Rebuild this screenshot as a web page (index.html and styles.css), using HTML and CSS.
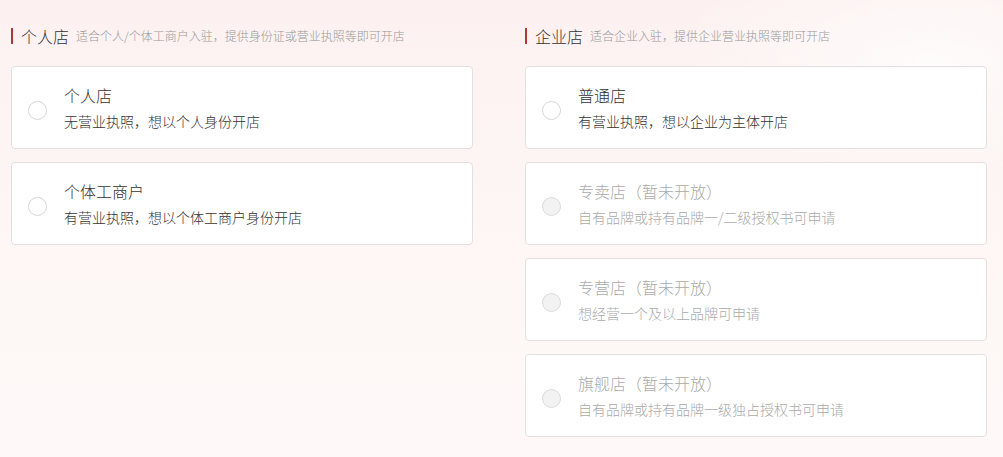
FILE: index.html
```html
<!DOCTYPE html>
<html lang="zh-CN">
<head>
    <meta charset="UTF-8">
    <meta name="viewport" content="width=device-width, initial-scale=1.0">
    <title>选择店铺类型</title>
    <link rel="stylesheet" href="styles.css">
</head>
<body>
    <div class="wrap">
        <div class="col">
            <div class="head">
                <span class="head-title">个人店</span>
                <span class="head-desc">适合个人/个体工商户入驻，提供身份证或营业执照等即可开店</span>
            </div>
            <ul class="list">
                <li class="item">
                    <i class="radio"></i>
                    <div class="text">
                        <p class="name">个人店</p>
                        <p class="desc">无营业执照，想以个人身份开店</p>
                    </div>
                </li>
                <li class="item">
                    <i class="radio"></i>
                    <div class="text">
                        <p class="name">个体工商户</p>
                        <p class="desc">有营业执照，想以个体工商户身份开店</p>
                    </div>
                </li>
            </ul>
        </div>
        <div class="col">
            <div class="head">
                <span class="head-title">企业店</span>
                <span class="head-desc">适合企业入驻，提供企业营业执照等即可开店</span>
            </div>
            <ul class="list">
                <li class="item">
                    <i class="radio"></i>
                    <div class="text">
                        <p class="name">普通店</p>
                        <p class="desc">有营业执照，想以企业为主体开店</p>
                    </div>
                </li>
                <li class="item disabled">
                    <i class="radio"></i>
                    <div class="text">
                        <p class="name">专卖店（暂未开放）</p>
                        <p class="desc">自有品牌或持有品牌一/二级授权书可申请</p>
                    </div>
                </li>
                <li class="item disabled">
                    <i class="radio"></i>
                    <div class="text">
                        <p class="name">专营店（暂未开放）</p>
                        <p class="desc">想经营一个及以上品牌可申请</p>
                    </div>
                </li>
                <li class="item disabled">
                    <i class="radio"></i>
                    <div class="text">
                        <p class="name">旗舰店（暂未开放）</p>
                        <p class="desc">自有品牌或持有品牌一级独占授权书可申请</p>
                    </div>
                </li>
            </ul>
        </div>
    </div>
</body>
</html>
```

FILE: styles.css
```css
* {
    margin: 0;
    padding: 0;
}
ul,li {
    list-style: none;
}
html,body {
    height: 100%;
}
body {
    font-family: "Noto Sans CJK SC", "Liberation Sans", sans-serif;
    color: #333;
    background: radial-gradient(ellipse 260px 120px at 930px 60px, rgba(255,255,255,0.7), rgba(255,255,255,0)),
                linear-gradient(180deg, #fcf1f0 0%, #fdf6f5 45%, #fef9f8 100%);
}
.wrap {
    display: flex;
    gap: 52px;
    padding: 28px 16px 0 11px;
}
.col {
    flex: 1;
}
.head {
    height: 16px;
    display: flex;
    align-items: center;
    border-left: 2px solid #a83a3a;
    padding-left: 8px;
    margin-bottom: 22px;
}
.head-title {
    font-size: 16px;
    font-weight: 300;
    color: #333;
    line-height: 16px;
}
.head-desc {
    font-size: 12px;
    font-weight: 300;
    color: #999;
    margin-left: 7px;
    line-height: 16px;
}
.list {
    display: flex;
    flex-direction: column;
    gap: 13px;
}
.item {
    height: 83px;
    box-sizing: border-box;
    background: #fff;
    border: 1px solid #e1dfdf;
    border-radius: 4px;
    display: flex;
    align-items: center;
    padding-left: 16px;
}
.radio {
    width: 19px;
    height: 19px;
    box-sizing: border-box;
    border: 1px solid #d6d6d6;
    border-radius: 50%;
    background: #fff;
    margin-right: 17px;
    margin-top: 6px;
}
.name {
    font-size: 16px;
    font-weight: 300;
    line-height: 22px;
    color: #333;
}
.desc {
    font-size: 14px;
    font-weight: 300;
    line-height: 22px;
    margin-top: 4px;
    color: #333;
}
.disabled .radio {
    background: #f2f2f2;
    border-color: #dcdcdc;
}
.disabled .name,
.disabled .desc {
    color: #aaa;
}
```
